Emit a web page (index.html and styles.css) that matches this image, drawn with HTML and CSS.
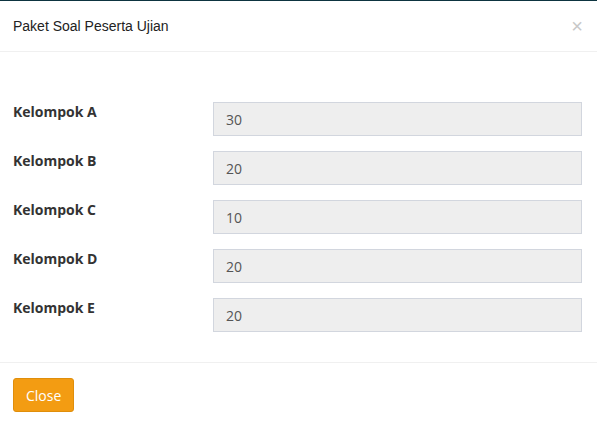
FILE: index.html
```html
<!DOCTYPE html>
<html>
<head>
<meta charset="utf-8">
<link rel="stylesheet" href="styles.css">
</head>
<body>
<div class="modal">
  <div class="modal-header">
    <h4 class="modal-title">Paket Soal Peserta Ujian</h4>
    <span class="close">×</span>
  </div>
  <div class="modal-body">
    <div class="form-row"><label>Kelompok A</label><input class="field" value="30" readonly></div>
    <div class="form-row"><label>Kelompok B</label><input class="field" value="20" readonly></div>
    <div class="form-row"><label>Kelompok C</label><input class="field" value="10" readonly></div>
    <div class="form-row"><label>Kelompok D</label><input class="field" value="20" readonly></div>
    <div class="form-row"><label>Kelompok E</label><input class="field" value="20" readonly></div>
  </div>
  <div class="modal-footer">
    <button class="btn-close">Close</button>
  </div>
</div>
</body>
</html>
```
FILE: styles.css
```css
html, body {
  margin: 0;
  padding: 0;
  background: #fff;
}
.modal {
  border-top: 1px solid #0d3440;
  font-family: "Open Sans", sans-serif;
  font-size: 14px;
  color: #333;
}
.modal-header {
  height: 51px;
  border-bottom: 1px solid #f0f0f0;
  display: flex;
  align-items: center;
  justify-content: space-between;
  padding: 0 14px 0 13px;
  box-sizing: border-box;
}
.modal-title {
  margin: 0;
  font-family: "Liberation Sans", Arial, sans-serif;
  font-weight: normal;
  font-size: 14px;
  color: #222;
}
.close {
  font-family: "Liberation Sans", Arial, sans-serif;
  font-size: 20px;
  color: #c8c8c8;
  line-height: 1;
}
.modal-body {
  padding: 50px 15px 30px 13px;
  display: flex;
  flex-direction: column;
  gap: 15px;
  border-bottom: 1px solid #f0f0f0;
}
.form-row {
  display: grid;
  grid-template-columns: 200px 1fr;
  align-items: start;
}
.form-row label {
  font-weight: bold;
  line-height: 20px;
  color: #333;
}
.field {
  height: 34px;
  box-sizing: border-box;
  border: 1px solid #d2d6de;
  background: #eee;
  padding: 0 12px;
  font-family: "Open Sans", sans-serif;
  font-size: 14px;
  color: #555;
  outline: none;
  width: 100%;
}
.modal-footer {
  padding: 15px 13px;
}
.btn-close {
  height: 34px;
  padding: 0 12px;
  background: #f39c12;
  border: 1px solid #e08e0b;
  border-radius: 3px;
  color: #fff;
  font-family: "Open Sans", sans-serif;
  font-size: 14px;
}
```
